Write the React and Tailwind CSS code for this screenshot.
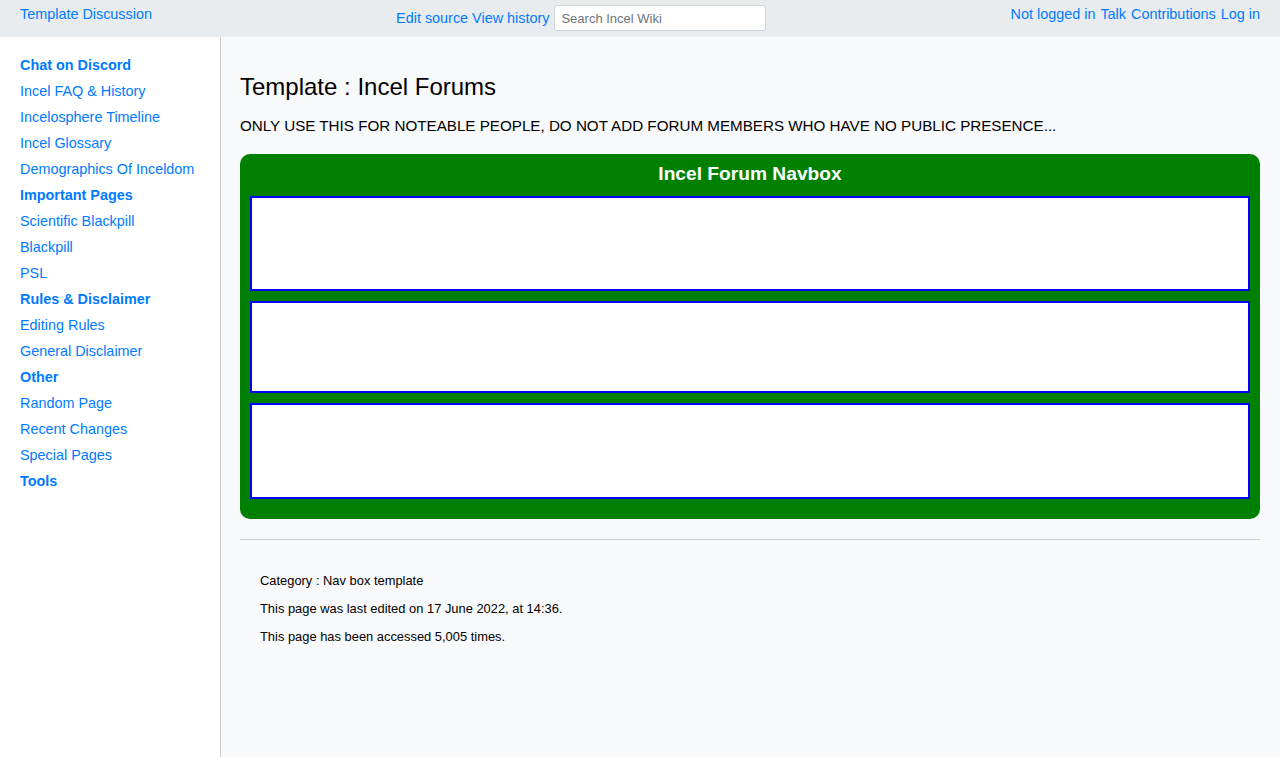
const sidebar = [
  { label: 'Chat on Discord', bold: true },
  { label: 'Incel FAQ & History' },
  { label: 'Incelosphere Timeline' },
  { label: 'Incel Glossary' },
  { label: 'Demographics Of Inceldom' },
  { label: 'Important Pages', bold: true },
  { label: 'Scientific Blackpill' },
  { label: 'Blackpill' },
  { label: 'PSL' },
  { label: 'Rules & Disclaimer', bold: true },
  { label: 'Editing Rules' },
  { label: 'General Disclaimer' },
  { label: 'Other', bold: true },
  { label: 'Random Page' },
  { label: 'Recent Changes' },
  { label: 'Special Pages' },
  { label: 'Tools', bold: true },
];

export default function App() {
  return (
    <div className="min-h-screen flex flex-col bg-[#f8f9fa] text-black font-['Liberation_Sans',Arial,sans-serif]">
      {/* top bar */}
      <header className="flex justify-between items-start bg-[#e9ecef] px-5 pt-[5px] pb-[6px] text-[14.4px] text-[#007bff]">
        <a href="#" className="leading-[18px]">Template Discussion</a>
        <div className="flex items-center gap-1">
          <a href="#" className="pt-px">Edit source</a>
          <a href="#" className="pt-px">View history</a>
          <input
            type="text"
            placeholder="Search Incel Wiki"
            className="ml-px w-[212px] h-[26px] px-[6px] text-[13px] text-black bg-white border border-[#ced4da] rounded-[3px] placeholder:text-[#6c757d] outline-none"
          />
        </div>
        <div className="flex gap-[5px] leading-[18px]">
          <a href="#">Not logged in</a>
          <a href="#">Talk</a>
          <a href="#">Contributions</a>
          <a href="#">Log in</a>
        </div>
      </header>

      <div className="flex flex-1">
        <nav className="w-[221px] shrink-0 bg-white border-r border-[#cccccc] pl-5 pt-[15px]">
          <ul className="text-[14.4px] leading-[26px] text-[#007bff]">
            {sidebar.map((item) => (
              <li key={item.label} className={item.bold ? 'font-bold' : ''}>
                <a href="#">{item.label}</a>
              </li>
            ))}
          </ul>
        </nav>

        <main className="flex-1 pl-[19px] pr-5 pt-[35px]">
          <h1 className="text-[24px] leading-[30px]">Template : Incel Forums</h1>
          <p className="mt-[15px] text-[15.2px] leading-[18px]">
            ONLY USE THIS FOR NOTEABLE PEOPLE, DO NOT ADD FORUM MEMBERS WHO HAVE NO PUBLIC PRESENCE...
          </p>

          <div className="mt-[19px] bg-[#008000] rounded-[10px] px-[10px] pt-[10px] pb-5">
            <h2 className="text-center text-white font-bold text-[19.2px] leading-[20px]">Incel Forum Navbox</h2>
            <div className="mt-3 flex flex-col gap-[10px]">
              <div className="h-[95px] bg-white border-2 border-[#0000ff]"></div>
              <div className="h-[92px] bg-white border-2 border-[#0000ff]"></div>
              <div className="h-[96px] bg-white border-2 border-[#0000ff]"></div>
            </div>
          </div>

          <hr className="mt-5 border-t border-[#cccccc]" />

          <footer className="px-5 pt-[34px] text-[12.9px] leading-[14px] flex flex-col gap-[14px]">
            <p>Category : Nav box template</p>
            <p>This page was last edited on 17 June 2022, at 14:36.</p>
            <p>This page has been accessed 5,005 times.</p>
          </footer>
        </main>
      </div>
    </div>
  );
}
